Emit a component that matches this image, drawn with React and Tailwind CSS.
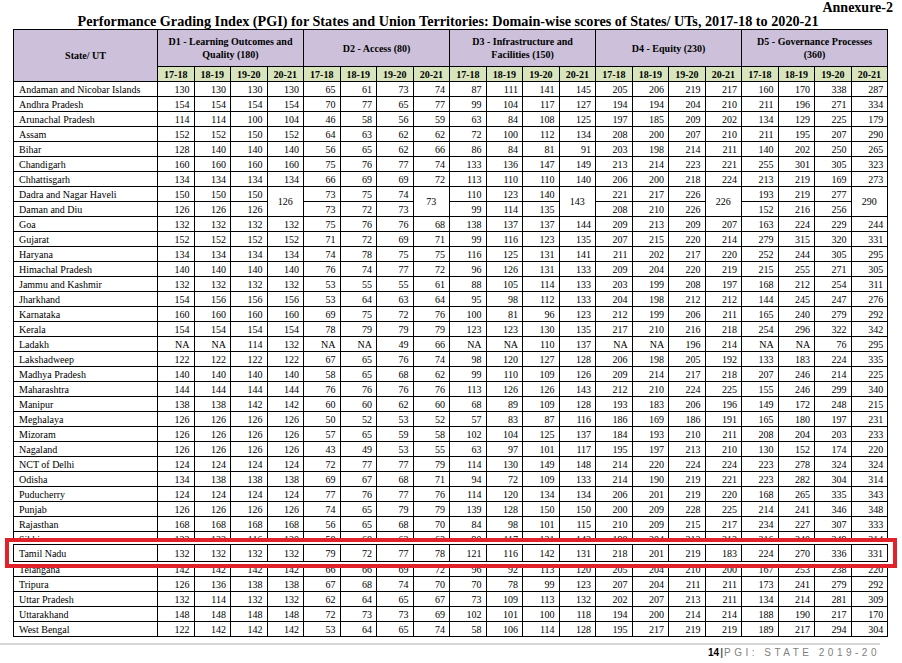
import React from "react";

const rows = [
  ["Andaman and Nicobar Islands", 130,130,130,130, 65,61,73,74, 87,111,141,145, 205,206,219,217, 160,170,338,287],
  ["Andhra Pradesh", 154,154,154,154, 70,77,65,77, 99,104,117,127, 194,194,204,210, 211,196,271,334],
  ["Arunachal Pradesh", 114,114,100,104, 46,58,56,59, 63,84,108,125, 197,185,209,202, 134,129,225,179],
  ["Assam", 152,152,150,152, 64,63,62,62, 72,100,112,134, 208,200,207,210, 211,195,207,290],
  ["Bihar", 128,140,140,140, 56,65,62,66, 86,84,81,91, 203,198,214,211, 140,202,250,265],
  ["Chandigarh", 160,160,160,160, 75,76,77,74, 133,136,147,149, 213,214,223,221, 255,301,305,323],
  ["Chhattisgarh", 134,134,134,134, 66,69,69,72, 113,110,110,140, 206,200,218,224, 213,219,169,273],
  "DADRA",
  "DAMAN",
  ["Goa", 132,132,132,132, 75,76,76,68, 138,137,137,144, 209,213,209,207, 163,224,229,244],
  ["Gujarat", 152,152,152,152, 71,72,69,71, 99,116,123,135, 207,215,220,214, 279,315,320,331],
  ["Haryana", 134,134,134,134, 74,78,75,75, 116,125,131,141, 211,202,217,220, 252,244,305,295],
  ["Himachal Pradesh", 140,140,140,140, 76,74,77,72, 96,126,131,133, 209,204,220,219, 215,255,271,305],
  ["Jammu and Kashmir", 132,132,132,132, 53,55,55,61, 88,105,114,133, 203,199,208,197, 168,212,254,311],
  ["Jharkhand", 154,156,156,156, 53,64,63,64, 95,98,112,133, 204,198,212,212, 144,245,247,276],
  ["Karnataka", 160,160,160,160, 69,75,72,76, 100,81,96,123, 212,199,206,211, 165,240,279,292],
  ["Kerala", 154,154,154,154, 78,79,79,79, 123,123,130,135, 217,210,216,218, 254,296,322,342],
  ["Ladakh", "NA","NA",114,132, "NA","NA",49,66, "NA","NA",110,137, "NA","NA",196,214, "NA","NA",76,295],
  ["Lakshadweep", 122,122,122,122, 67,65,76,74, 98,120,127,128, 206,198,205,192, 133,183,224,335],
  ["Madhya Pradesh", 140,140,140,140, 58,65,68,62, 99,110,109,126, 209,214,217,218, 207,246,214,225],
  ["Maharashtra", 144,144,144,144, 76,76,76,76, 113,126,126,143, 212,210,224,225, 155,246,299,340],
  ["Manipur", 138,138,142,142, 60,60,62,60, 68,89,109,128, 193,183,206,196, 149,172,248,215],
  ["Meghalaya", 126,126,126,126, 50,52,53,52, 57,83,87,116, 186,169,186,191, 165,180,197,231],
  ["Mizoram", 126,126,126,126, 57,65,59,58, 102,104,125,137, 184,193,210,211, 208,204,203,233],
  ["Nagaland", 126,126,126,126, 43,49,53,55, 63,97,101,117, 195,197,213,210, 130,152,174,220],
  ["NCT of Delhi", 124,124,124,124, 72,77,77,79, 114,130,149,148, 214,220,224,224, 223,278,324,324],
  ["Odisha", 134,138,138,138, 69,67,68,71, 94,72,109,133, 214,190,219,221, 223,282,304,314],
  ["Puducherry", 124,124,124,124, 77,76,77,76, 114,120,134,134, 206,201,219,220, 168,265,335,343],
  ["Punjab", 126,126,126,126, 74,65,79,79, 139,128,150,150, 200,209,228,225, 214,241,346,348],
  ["Rajasthan", 168,168,168,168, 56,65,68,70, 84,98,101,115, 210,209,215,217, 234,227,307,333],
  ["Sikkim", 122,122,116,120, 58,68,62,63, 90,117,121,142, 198,204,212,213, 216,240,249,214],
  ["Tamil Nadu", 132,132,132,132, 79,72,77,78, 121,116,142,131, 218,201,219,183, 224,270,336,331],
  ["Telangana", 142,142,142,142, 66,66,69,72, 96,92,113,120, 205,204,210,200, 167,253,238,220],
  ["Tripura", 126,136,138,138, 67,68,74,70, 70,78,99,123, 207,204,211,211, 173,241,279,292],
  ["Uttar Pradesh", 132,114,132,132, 62,64,65,67, 73,109,113,132, 202,207,213,211, 134,214,281,309],
  ["Uttarakhand", 148,148,148,148, 72,73,73,69, 102,101,100,118, 194,200,214,214, 188,190,217,170],
  ["West Bengal", 122,142,142,142, 53,64,65,74, 58,106,114,128, 195,217,219,219, 189,217,294,304],
];

const dadra = ["Dadra and Nagar Haveli", [150,150,150], [73,75,74], [110,123,140], [221,217,226], [193,219,277]];
const daman = ["Daman and Diu", [126,126,126], [73,72,73], [99,114,135], [208,210,226], [152,216,256]];
const merged = [126, 73, 143, 226, 290];

const years = ["17-18", "18-19", "19-20", "20-21"];
const groups = [
  ["D1 - Learning Outcomes and", "Quality (180)"],
  ["D2 - Access (80)"],
  ["D3 - Infrastructure and", "Facilities (150)"],
  ["D4 - Equity (230)"],
  ["D5 - Governance Processes", "(360)"],
];

const td = "border border-black text-right pr-[4px] pl-0 py-0 h-[15px] leading-[13px]";
const tdName = "border border-black text-left pl-[5px] py-0 h-[15px] leading-[13px] whitespace-nowrap";

function Cols() {
  return (
    <colgroup>
      <col className="w-[144px]" />
      {Array.from({ length: 20 }).map((_, i) => (
        <col key={i} className="w-[36.5px]" />
      ))}
    </colgroup>
  );
}

function DataRow({ r }) {
  return (
    <tr>
      <td className={tdName}>{r[0]}</td>
      {r.slice(1).map((v, i) => (
        <td key={i} className={td}>{v}</td>
      ))}
    </tr>
  );
}

export default function App() {
  return (
    <div className="relative w-[902px] h-[663px] bg-white overflow-hidden text-black font-['Liberation_Serif',serif]">
      <div className="flex justify-end pr-[9px] h-[11px] text-[14px] font-bold leading-[14px] pt-[1px]">Annexure-2</div>
      <div className="text-center text-[14.2px] font-bold leading-[16px] h-[18px] pt-[2px] pr-[6px]">
        Performance Grading Index (PGI) for States and Union Territories: Domain-wise scores of States/ UTs, 2017-18 to 2020-21
      </div>
      <div className="pl-[13px]">
        <table className="table-fixed border-collapse border-[1.5px] border-black w-[874px] text-[10px]">
          <Cols />
          <thead>
            <tr className="bg-[#ccc0da]">
              <th rowSpan={2} className="border border-black font-bold text-[10px] leading-[12px] align-middle">
                <div className="h-[36px] flex items-center justify-center">State/ UT</div>
              </th>
              {groups.map((g, i) => (
                <th key={i} colSpan={4} className="border border-black font-bold text-[10px] leading-[13px] h-[37px] align-middle p-0">
                  {g.map((l, j) => (
                    <div key={j}>{l}</div>
                  ))}
                </th>
              ))}
            </tr>
            <tr className="bg-[#d8e4bc]">
              {groups.map((g, i) =>
                years.map((y) => (
                  <th key={i + y} className="border border-black font-bold text-[10px] leading-[13px] h-[15px] p-0 text-center bg-[#d8e4bc]">
                    {y}
                  </th>
                ))
              )}
            </tr>
          </thead>
          <tbody>
            {rows.map((r, idx) => {
              if (r === "DADRA") {
                return (
                  <tr key={idx}>
                    <td className={tdName}>{dadra[0]}</td>
                    {dadra.slice(1).map((vals, gi) => (
                      <React.Fragment key={gi}>
                        {vals.map((v, vi) => (
                          <td key={vi} className={td}>{v}</td>
                        ))}
                        <td rowSpan={2} className="border border-black text-center py-0 leading-[13px] align-middle">{merged[gi]}</td>
                      </React.Fragment>
                    ))}
                  </tr>
                );
              }
              if (r === "DAMAN") {
                return (
                  <tr key={idx}>
                    <td className={tdName}>{daman[0]}</td>
                    {daman.slice(1).map((vals, gi) => (
                      <React.Fragment key={gi}>
                        {vals.map((v, vi) => (
                          <td key={vi} className={td}>{v}</td>
                        ))}
                      </React.Fragment>
                    ))}
                  </tr>
                );
              }
              return <DataRow key={idx} r={r} />;
            })}
          </tbody>
        </table>
      </div>

      {/* Highlight overlay for Tamil Nadu */}
      <div className="absolute left-[5px] top-[538px] w-[892px] h-[30px] border-[4px] border-[#e1222a] bg-white">
        <div className="pl-[4px] pt-[2px]">
          <table className="table-fixed border-collapse border border-black w-[874px] text-[10px]">
            <Cols />
            <tbody>
              <tr>
                <td className="border border-black text-left pl-[5px] py-0 h-[17px] leading-[13px] whitespace-nowrap">Tamil Nadu</td>
                {rows[31].slice(1).map((v, i) => (
                  <td key={i} className="border border-black text-right pr-[4px] py-0 h-[17px] leading-[13px]">{v}</td>
                ))}
              </tr>
            </tbody>
          </table>
        </div>
      </div>

      {/* Footer */}
      <div className="absolute left-0 top-[643px] w-[880px] h-[2px] bg-[#d6d6d6]" />
      <div className="absolute right-[22px] top-[647px] flex items-baseline font-['Liberation_Sans',sans-serif] text-[10px] leading-[12px]">
        <span className="font-bold text-black">14</span>
        <span className="font-bold text-[#555] mx-[1px]">|</span>
        <span className="text-[#7f7f7f] tracking-[3.5px]">PGI: STATE 2019-20</span>
      </div>
    </div>
  );
}
